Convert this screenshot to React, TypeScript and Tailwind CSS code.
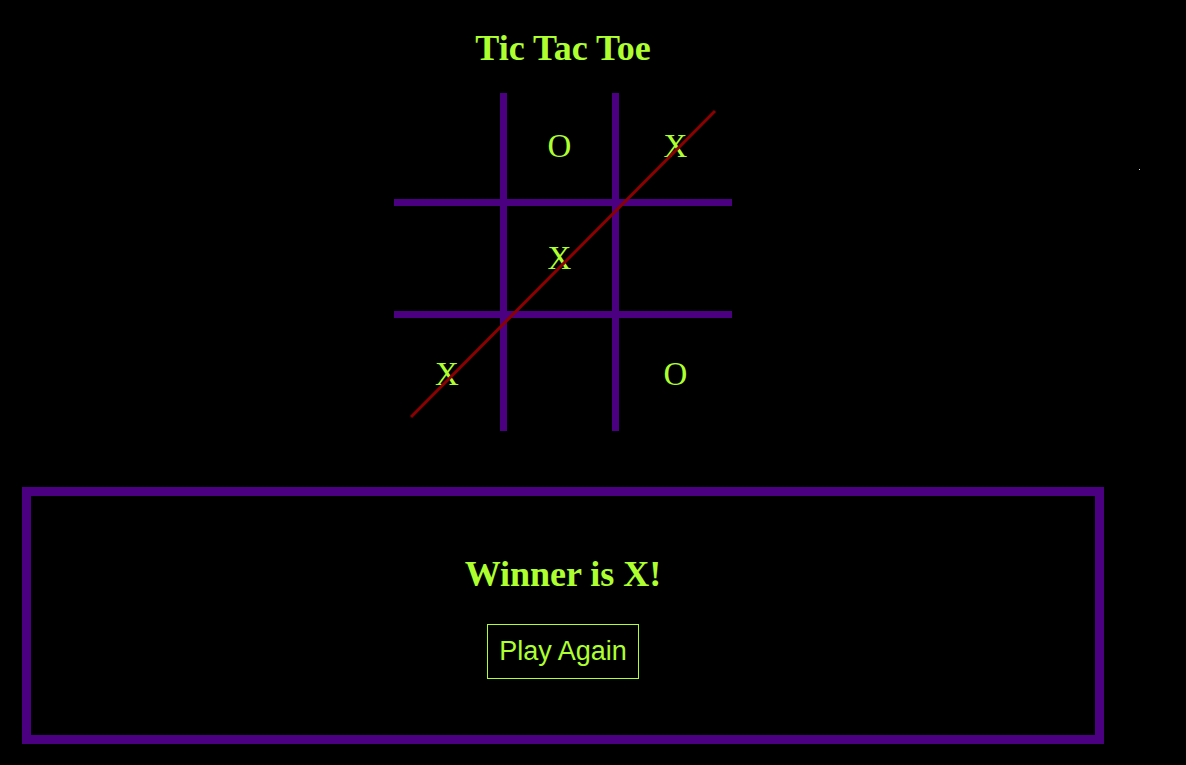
import React from "react";

const cells = ["", "O", "X", "", "X", "", "X", "", "O"];

export default function App() {
  return (
    <div className="relative min-h-screen w-full bg-black">
      <div className="flex w-[1126px] flex-col items-center pt-[28px]">
        <h1
          className="text-[36px] font-bold leading-[40px] text-[#adff2f]"
          style={{ fontFamily: '"Liberation Serif", "Times New Roman", serif' }}
        >
          Tic Tac Toe
        </h1>
        <div className="relative mt-[25px]">
          <div className="grid grid-cols-[113px_112px_113px] grid-rows-[113px_112px_113px]">
            {cells.map((c, i) => {
              const col = i % 3;
              const row = Math.floor(i / 3);
              return (
                <div
                  key={i}
                  className={[
                    "flex items-center justify-center border-solid border-[#4b0082] text-[33px] leading-[37px] text-[#adff2f]",
                    col < 2 ? "border-r-[7px]" : "",
                    row < 2 ? "border-b-[7px]" : "",
                  ].join(" ")}
                  style={{ fontFamily: '"Liberation Serif", "Times New Roman", serif' }}
                >
                  {c}
                </div>
              );
            })}
          </div>
          <svg
            className="pointer-events-none absolute left-0 top-0"
            width="338"
            height="338"
            viewBox="0 0 338 338"
          >
            <line x1="17" y1="324" x2="321" y2="18" stroke="#8b0000" strokeWidth="3" />
          </svg>
        </div>
        <div className="mt-[56px] flex w-[1082px] flex-col items-center border-[9px] border-solid border-[#4b0082] pb-[56px] pt-[58px]">
          <h2
            className="text-[36px] font-bold leading-[41px] text-[#adff2f]"
            style={{ fontFamily: '"Liberation Serif", "Times New Roman", serif' }}
          >
            Winner is X!
          </h2>
          <button
            className="mt-[29px] border border-solid border-[#adff2f] bg-black px-[11px] py-[11px] text-[27px] leading-[31px] text-[#adff2f]"
            style={{ fontFamily: '"Liberation Sans", Arial, sans-serif' }}
          >
            Play Again
          </button>
        </div>
      </div>
      <div className="absolute left-[1139px] top-[169px] h-px w-px bg-[#dddddd]" />
    </div>
  );
}
